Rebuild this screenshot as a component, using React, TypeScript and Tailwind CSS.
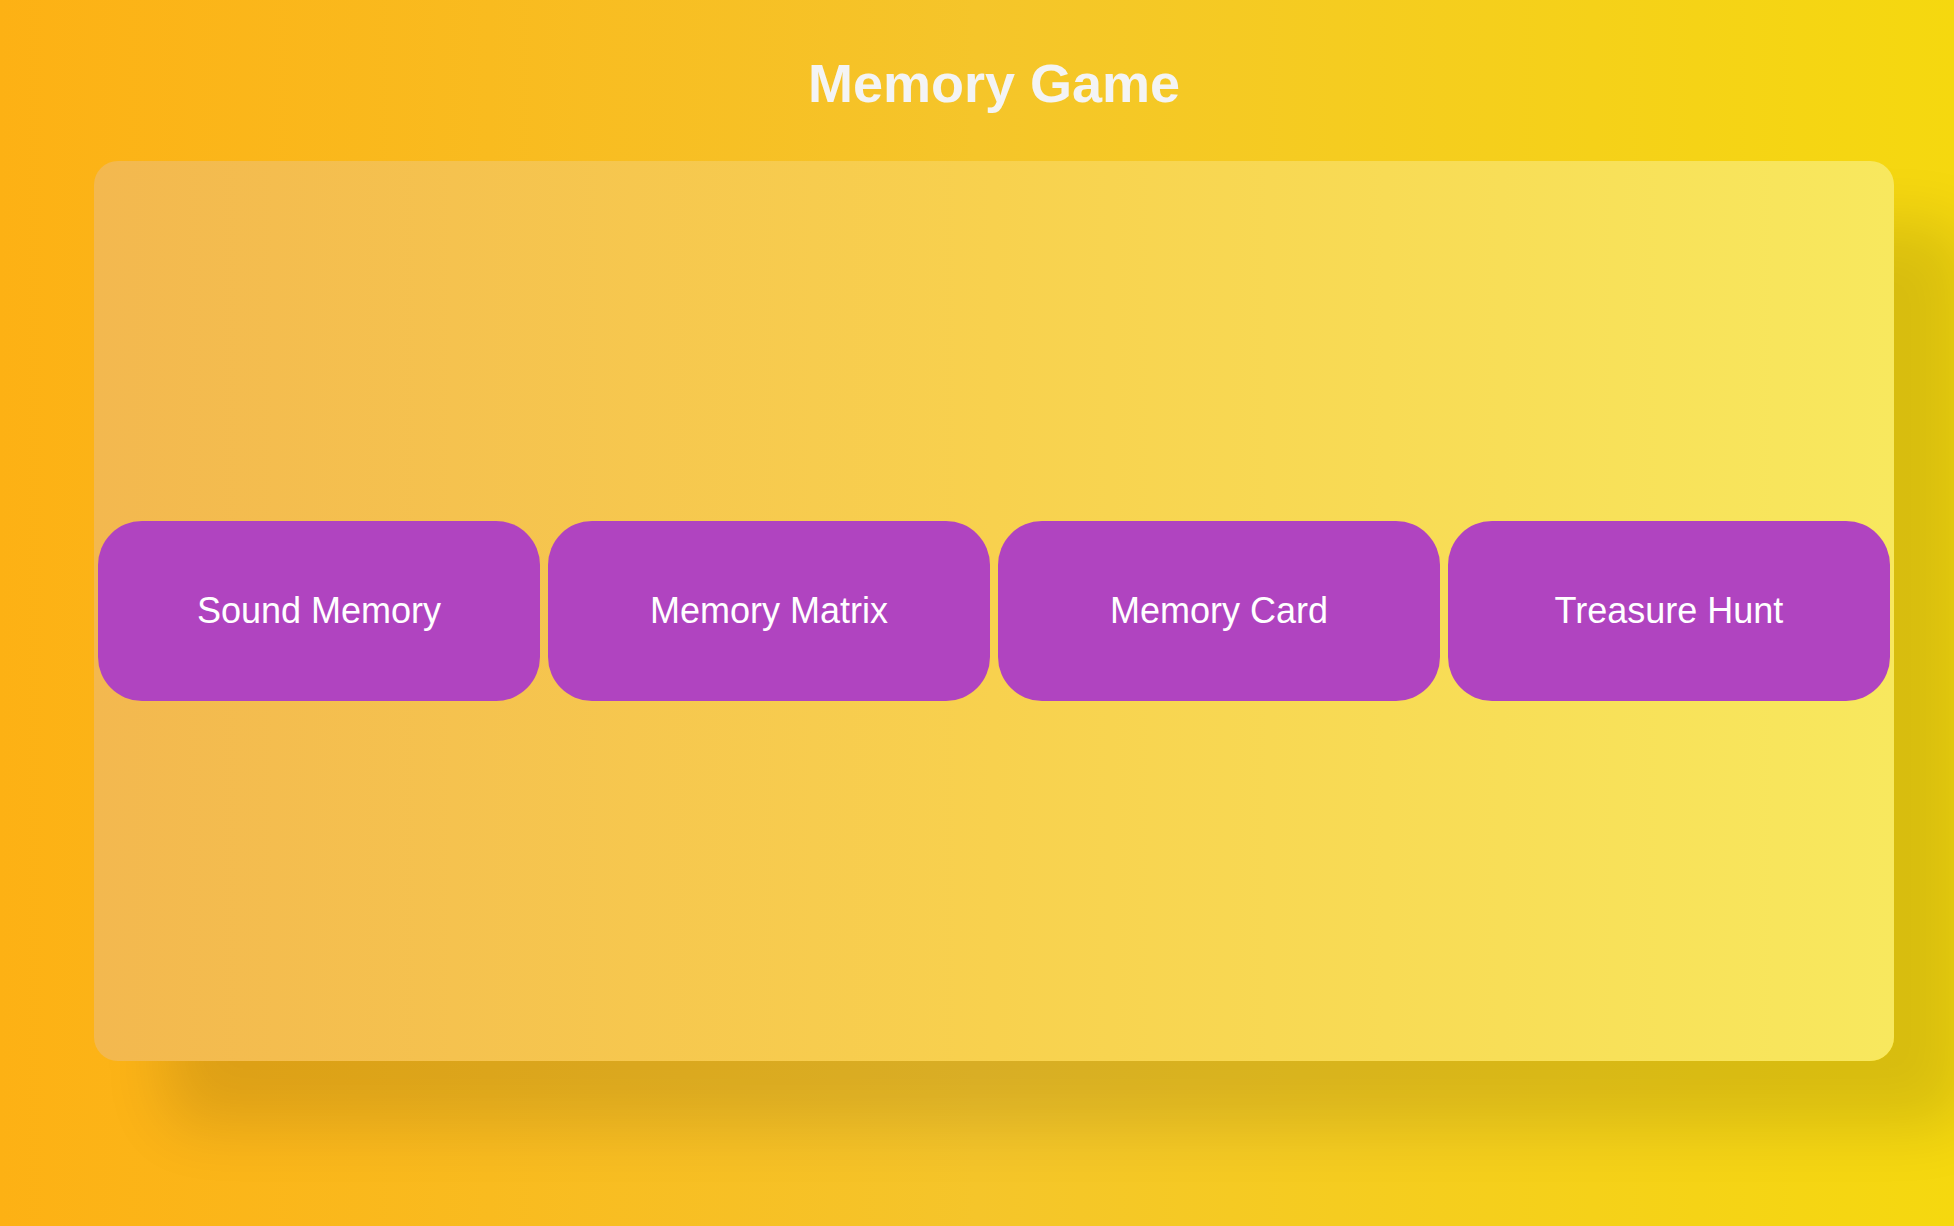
const games = ['Sound Memory', 'Memory Matrix', 'Memory Card', 'Treasure Hunt'];

export default function App() {
  return (
    <div
      className="min-h-screen w-full bg-linear-to-r/srgb from-[#fdb114] via-[#f5c52a] to-[#f5d80f] pt-[53px]"
      style={{ fontFamily: '"Liberation Sans", Arial, sans-serif' }}
    >
      <div className="ml-[94px] w-[1800px]">
        {/* Title */}
        <h1 className="text-center text-[54px] font-bold leading-[61px] text-[#f4f4f4]">
          Memory Game
        </h1>

        {/* Board */}
        <div className="mt-[47px] flex h-[900px] items-center rounded-[24px] bg-linear-to-r/srgb from-[#f3b84f] via-[#f8d14e] to-[#f8e85e] shadow-[72px_64px_64px_rgba(0,0,0,0.12)]">
          {games.map((game) => (
            <button
              key={game}
              className="m-1 flex h-[180px] flex-1 items-center justify-center rounded-[44px] bg-[#b044c0] text-[36px] text-white"
            >
              {game}
            </button>
          ))}
        </div>
      </div>
    </div>
  );
}
